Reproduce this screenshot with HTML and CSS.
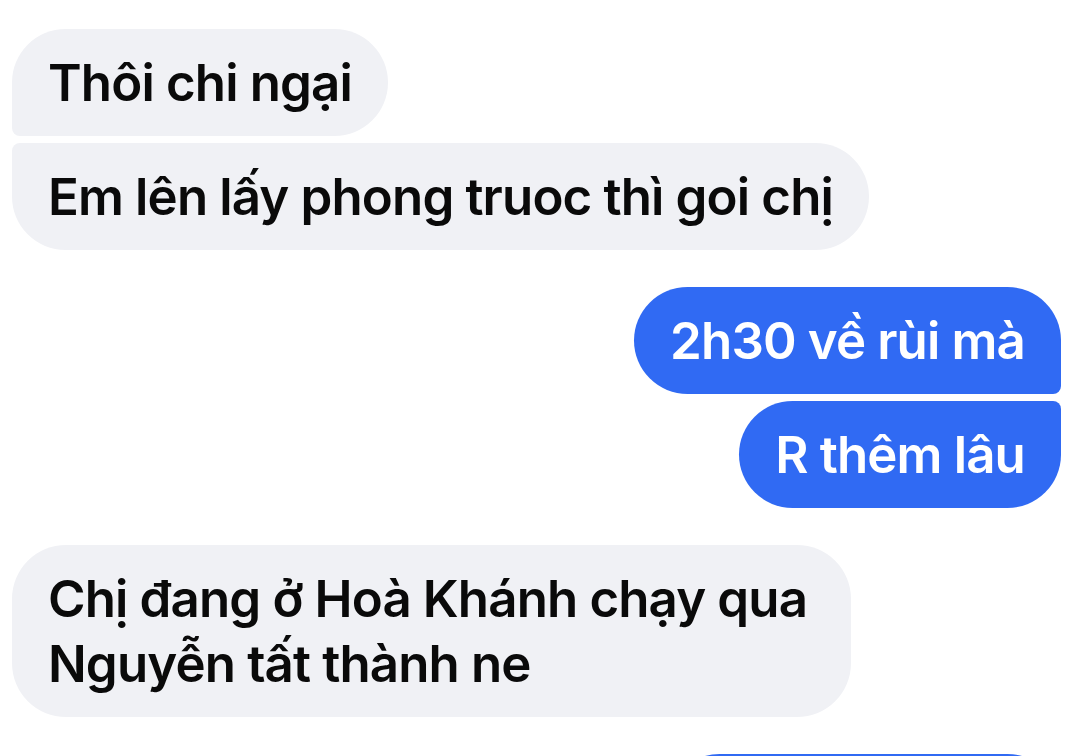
FILE: index.html
```html
<!DOCTYPE html>
<html lang="vi">
<head>
<meta charset="utf-8">
<title>Chat</title>
<link rel="stylesheet" href="styles.css">
</head>
<body>
<div class="thread">
  <div class="group in">
    <div class="bubble first">Thôi chi ngại</div>
    <div class="bubble last">Em lên lấy phong truoc thì goi chị</div>
  </div>
  <div class="group out">
    <div class="bubble first">2h30 về rùi mà</div>
    <div class="bubble last">R thêm lâu</div>
  </div>
  <div class="group in">
    <div class="bubble single wide">Chị đang ở Hoà Khánh chạy qua Nguyễn tất thành ne</div>
  </div>
  <div class="group out">
    <div class="bubble single partial"></div>
  </div>
</div>
</body>
</html>
```

FILE: styles.css
```css
html, body {
  margin: 0;
  padding: 0;
  background: #ffffff;
  overflow: hidden;
}

body {
  width: 1086px;
  height: 756px;
  font-family: Inter, "Noto Sans", "Liberation Sans", sans-serif;
}

.thread {
  display: flex;
  flex-direction: column;
  gap: 37px;
  padding: 29px 25px 0 12px;
}

.group {
  display: flex;
  flex-direction: column;
  gap: 7px;
}

.group.in {
  align-items: flex-start;
}

.group.out {
  align-items: flex-end;
}

.bubble {
  font-size: 51px;
  font-weight: 580;
  line-height: 65px;
  padding: 21px 36px;
  border-radius: 54px;
  letter-spacing: -0.85px;
  box-sizing: border-box;
  white-space: nowrap;
}

.bubble.wide {
  width: 839px;
  white-space: normal;
}

.in .bubble {
  background: #f0f1f5;
  color: #0a0a0a;
}

.out .bubble {
  background: #306af3;
  color: #ffffff;
}

.in .bubble.first {
  border-bottom-left-radius: 8px;
}

.in .bubble.last {
  border-top-left-radius: 8px;
}

.out .bubble.first {
  border-bottom-right-radius: 8px;
}

.out .bubble.last {
  border-top-right-radius: 8px;
}

.bubble.partial {
  width: 395px;
  height: 107px;
}
```
